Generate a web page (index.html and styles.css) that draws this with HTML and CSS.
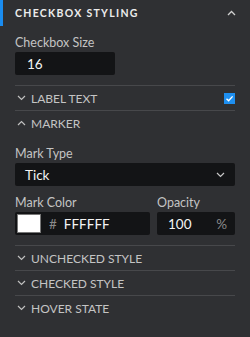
FILE: index.html
```html
<!DOCTYPE html>
<html lang="en">
<head>
    <meta charset="UTF-8">
    <meta name="viewport" content="width=device-width, initial-scale=1.0">
    <title>Checkbox Styling</title>
    <link rel="stylesheet" href="styles.css">
</head>
<body>

    <div class="panel">
        <div class="panel-head">
            <span class="panel-title">CHECKBOX STYLING</span>
            <svg class="chev" width="9" height="6" viewBox="0 0 9 6"><path d="M1 5 L4.5 1.5 L8 5" fill="none" stroke="#d0d0d0" stroke-width="1.3"/></svg>
        </div>

        <div class="panel-body">
            <div class="field">
                <label>Checkbox Size</label>
                <div class="input small">16</div>
            </div>

            <div class="section first">
                <svg class="chev" width="9" height="6" viewBox="0 0 9 6"><path d="M1 1 L4.5 4.5 L8 1" fill="none" stroke="#c0c0c0" stroke-width="1.2"/></svg>
                <span class="section-name">LABEL TEXT</span>
                <span class="check">
                    <svg width="11" height="11" viewBox="0 0 11 11"><path d="M2.5 5.8 L4.6 7.8 L8.6 3.4" fill="none" stroke="#fff" stroke-width="1.4"/></svg>
                </span>
            </div>

            <div class="section open">
                <svg class="chev" width="9" height="6" viewBox="0 0 9 6"><path d="M1 5 L4.5 1.5 L8 5" fill="none" stroke="#c0c0c0" stroke-width="1.2"/></svg>
                <span class="section-name">MARKER</span>
            </div>

            <div class="field after-open">
                <label>Mark Type</label>
                <div class="input select">
                    <span>Tick</span>
                    <svg width="9" height="6" viewBox="0 0 9 6"><path d="M1 1 L4.5 4.5 L8 1" fill="none" stroke="#c8c8c8" stroke-width="1.2"/></svg>
                </div>
            </div>

            <div class="field-row">
                <div class="field color-field">
                    <label>Mark Color</label>
                    <div class="input color">
                        <span class="swatch"></span>
                        <span class="hash">#</span>
                        <span>FFFFFF</span>
                    </div>
                </div>
                <div class="field opacity-field">
                    <label>Opacity</label>
                    <div class="input opacity">
                        <span>100</span>
                        <span class="unit">%</span>
                    </div>
                </div>
            </div>

            <div class="section first">
                <svg class="chev" width="9" height="6" viewBox="0 0 9 6"><path d="M1 1 L4.5 4.5 L8 1" fill="none" stroke="#c0c0c0" stroke-width="1.2"/></svg>
                <span class="section-name">UNCHECKED STYLE</span>
            </div>
            <div class="section">
                <svg class="chev" width="9" height="6" viewBox="0 0 9 6"><path d="M1 1 L4.5 4.5 L8 1" fill="none" stroke="#c0c0c0" stroke-width="1.2"/></svg>
                <span class="section-name">CHECKED STYLE</span>
            </div>
            <div class="section">
                <svg class="chev" width="9" height="6" viewBox="0 0 9 6"><path d="M1 1 L4.5 4.5 L8 1" fill="none" stroke="#c0c0c0" stroke-width="1.2"/></svg>
                <span class="section-name">HOVER STATE</span>
            </div>
        </div>
    </div>

</body>
</html>
```

FILE: styles.css
```css
body {
    margin: 0;
    background-color: #2f3033;
    font-family: 'Lato', sans-serif;
    color: #c4c4c4;
    height: 337px;
    overflow: hidden;
}
.panel {
    width: 250px;
}
.panel-head {
    height: 26px;
    border-left: 3px solid #1a8cf0;
    padding: 0 14px 0 12px;
    display: flex;
    align-items: center;
    justify-content: space-between;
}
.panel-title {
    font-size: 10.5px;
    font-weight: bold;
    letter-spacing: 1.3px;
    color: #ececec;
}
.panel-body {
    padding: 0 15px;
}
.field {
    margin-top: 9px;
}
.field.after-open {
    margin-top: 11px;
}
.field label {
    display: block;
    font-size: 12.5px;
    line-height: 16px;
    margin-bottom: 1px;
    color: #c4c4c4;
}
.input {
    height: 23px;
    background: #131416;
    border-radius: 2px;
    display: flex;
    align-items: center;
    font-size: 13.5px;
    color: #f4f4f4;
    box-sizing: border-box;
}
.small {
    width: 100px;
    padding-left: 12px;
}
.select {
    padding: 0 10px;
    justify-content: space-between;
}
.field-row {
    display: flex;
    gap: 7px;
}
.color-field {
    width: 135px;
}
.opacity-field {
    flex: 1;
}
.color {
    padding-left: 2px;
}
.swatch {
    width: 24px;
    height: 19px;
    background: #ffffff;
    border: 1px solid #777;
    box-sizing: border-box;
    margin-right: 8px;
}
.hash {
    color: #8a8a8a;
    margin-right: 7px;
}
.opacity {
    padding: 0 8px 0 11px;
    justify-content: space-between;
}
.unit {
    color: #8a8a8a;
}
.section {
    height: 24px;
    border-top: 1px solid #47484b;
    display: flex;
    align-items: center;
    gap: 5px;
    padding-left: 2px;
}
.section.first {
    margin-top: 10px;
}
.section-name {
    font-size: 12px;
    color: #c4c4c4;
    flex: 1;
}
.check {
    width: 11px;
    height: 11px;
    background: #1e8ff0;
    display: flex;
}
```
